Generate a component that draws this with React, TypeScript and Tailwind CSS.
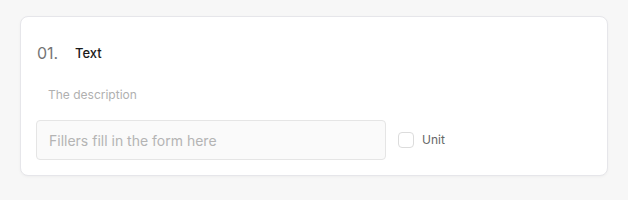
import React from "react";

export default function App() {
  return (
    <div className="min-h-[200px] w-full bg-[#f7f7f7] px-5 pt-4 pb-6" style={{ fontFamily: "Inter, 'Noto Sans', sans-serif" }}>
      <div className="rounded-lg border border-[#e6e6ea] bg-white px-[15px] pt-[26px] pb-[15px] shadow-[0_1px_3px_rgba(0,0,0,0.04)]">
        <div className="flex items-center pl-px">
          <span className="w-[38px] text-[16px] leading-5 text-[#757575]">01.</span>
          <span className="text-[13px] font-medium leading-5 text-[#1a1a1a]">Text</span>
        </div>
        <div className="mt-[24px] pl-3 text-[12px] leading-4 text-[#b0b0b0]">The description</div>
        <div className="mt-[17px] flex items-center">
          <div className="flex h-10 w-[350px] items-center rounded border border-[#e5e5e5] bg-[#fafafa] px-3 text-[14px] text-[#b4b4b4]">
            Fillers fill in the form here
          </div>
          <div className="ml-3 h-4 w-4 rounded border border-[#dcdcdc] bg-white"></div>
          <span className="ml-2 text-[12px] text-[#666666]">Unit</span>
        </div>
      </div>
    </div>
  );
}
